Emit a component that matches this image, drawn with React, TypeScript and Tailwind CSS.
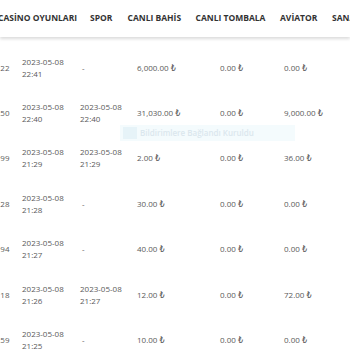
import React from "react";

const rows = [
  { id: "22", casino: ["2023-05-08", "22:41"], spor: null, bahis: "6,000.00 ₺", tombala: "0.00 ₺", aviator: "0.00 ₺" },
  { id: "50", casino: ["2023-05-08", "22:40"], spor: ["2023-05-08", "22:40"], bahis: "31,030.00 ₺", tombala: "0.00 ₺", aviator: "9,000.00 ₺" },
  { id: "99", casino: ["2023-05-08", "21:29"], spor: ["2023-05-08", "21:29"], bahis: "2.00 ₺", tombala: "0.00 ₺", aviator: "36.00 ₺" },
  { id: "28", casino: ["2023-05-08", "21:28"], spor: null, bahis: "30.00 ₺", tombala: "0.00 ₺", aviator: "0.00 ₺" },
  { id: "94", casino: ["2023-05-08", "21:27"], spor: null, bahis: "40.00 ₺", tombala: "0.00 ₺", aviator: "0.00 ₺" },
  { id: "18", casino: ["2023-05-08", "21:26"], spor: ["2023-05-08", "21:27"], bahis: "12.00 ₺", tombala: "0.00 ₺", aviator: "72.00 ₺" },
  { id: "59", casino: ["2023-05-08", "21:25"], spor: null, bahis: "10.00 ₺", tombala: "0.00 ₺", aviator: "0.00 ₺" },
];

function DateCell({ value }: { value: string[] | null }) {
  if (!value) return <span>-</span>;
  return (
    <div className="flex flex-col leading-[12px]">
      <span>{value[0]}</span>
      <span>{value[1]}</span>
    </div>
  );
}

export default function App() {
  return (
    <div
      className="relative h-[350px] w-[350px] overflow-hidden bg-white"
      style={{ fontFamily: '"Open Sans", "DejaVu Sans", sans-serif' }}
    >
      <div className="relative z-10 flex h-[37px] items-center whitespace-nowrap bg-white text-[8.5px] font-bold text-[#333] shadow-[0_2px_3px_rgba(0,0,0,0.14)]">
        <div className="-ml-[2px] w-[92px] shrink-0">CASİNO OYUNLARI</div>
        <div className="w-[37.5px] shrink-0">SPOR</div>
        <div className="w-[68px] shrink-0">CANLI BAHİS</div>
        <div className="w-[84.5px] shrink-0">CANLI TOMBALA</div>
        <div className="w-[52px] shrink-0">AVİATOR</div>
        <div className="shrink-0">SANAL OYUNLAR</div>
      </div>

      <div className="pt-[8px] text-[8px] text-[#5a5a5a]">
        {rows.map((row) => (
          <div key={row.id} className="flex h-[45.4px] items-center whitespace-nowrap">
            <div className="w-[22px] shrink-0 pr-[12.5px] text-right">{row.id}</div>
            <div className="w-[58px] shrink-0">
              <DateCell value={row.casino} />
            </div>
            <div className="w-[57px] shrink-0 pl-[2px]">
              {row.spor ? <div className="-ml-[2px]"><DateCell value={row.spor} /></div> : "-"}
            </div>
            <div className="w-[83px] shrink-0">{row.bahis}</div>
            <div className="w-[64px] shrink-0">{row.tombala}</div>
            <div className="shrink-0">{row.aviator}</div>
          </div>
        ))}
      </div>

      <div className="absolute left-[120px] top-[125px] flex h-[16px] w-[175px] items-center gap-[3px] bg-[#f1fafd]/80 px-[3px]">
        <div className="h-[12px] w-[14px] bg-[#e6f3f8]" />
        <span className="text-[8px] font-semibold text-[#dbe7ee]">Bildirimlere Bağlandı Kuruldu</span>
      </div>
    </div>
  );
}
